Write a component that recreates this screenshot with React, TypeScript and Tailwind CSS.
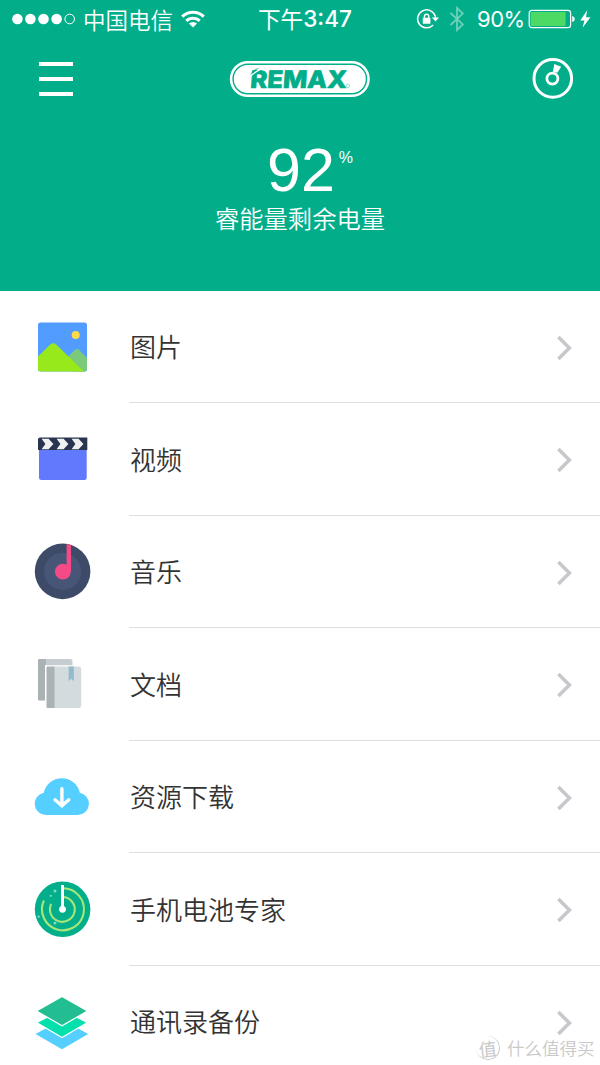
import type { ReactNode } from "react";

const cjk = "font-['Noto_Sans_CJK_SC',sans-serif]";

function PictureIcon() {
  return (
    <svg viewBox="0 0 64 64" className="w-16 h-16">
      <rect x="8" y="7.5" width="49" height="49" rx="2.5" fill="#529cff" />
      <circle cx="45.7" cy="20" r="4" fill="#ffd94a" />
      <path d="M38 42 L44.5 35.2 Q47 32.6 49.5 35.2 L57 43 V54 Q57 56.5 54.5 56.5 H44 Z" fill="#7bc97a" />
      <path d="M8 41.5 L20 29.7 Q23.2 26.8 26.4 29.7 L54 56.5 H10.5 Q8 56.5 8 54 Z" fill="#98e91b" />
    </svg>
  );
}

function VideoIcon() {
  return (
    <svg viewBox="0 0 64 64" className="w-16 h-16">
      <path d="M9 22 H56.7 V50.5 Q56.7 53 54.2 53 H11.5 Q9 53 9 50.5 Z" fill="#6179fd" />
      <path d="M8 12.5 Q8 10.5 10 10.5 H57.3 V23 H8 Z" fill="#283450" />
      <g fill="#eef0f1">
        <path d="M11.6 11.8 H18.6 L23.4 17 L18.6 22.2 H11.6 L15.4 17 Z" />
        <path d="M26.6 11.8 H33.6 L38.4 17 L33.6 22.2 H26.6 L30.4 17 Z" />
        <path d="M41.6 11.8 H48.6 L53.4 17 L48.6 22.2 H41.6 L45.4 17 Z" />
      </g>
    </svg>
  );
}

function MusicIcon() {
  return (
    <svg viewBox="0 0 64 64" className="w-16 h-16">
      <circle cx="32.6" cy="31.4" r="27.8" fill="#3d4a68" />
      <circle cx="32.6" cy="31.4" r="18.6" fill="#475577" />
      <path d="M36.6 4 Q39 4.2 41 5 V31.6 H36.6 Z" fill="#f44b86" />
      <circle cx="32.9" cy="31.6" r="7.9" fill="#f44b86" />
    </svg>
  );
}

function DocsIcon() {
  return (
    <svg viewBox="0 0 64 64" className="w-16 h-16">
      <path d="M15.5 7 H40 Q42.5 7 42.5 9.5 V13.2 H15.5 Z" fill="#c5cdd0" />
      <path d="M9 7 H16 V48.5 H9 Q8 48.5 8 47.5 V8 Q8 7 9 7 Z" fill="#aab2b4" />
      <rect x="15" y="13.2" width="2" height="36" fill="#fff" />
      <path d="M24 14.5 H48.5 Q51.2 14.5 51.2 17 V53.5 Q51.2 56 48.5 56 H24 Z" fill="#d3dbde" />
      <path d="M17.5 14.5 H24.5 V56 H17.5 Q16.5 56 16.5 55 V15.5 Q16.5 14.5 17.5 14.5 Z" fill="#aab2b4" />
      <path d="M38.6 14.5 H43.9 V29.3 L41.2 26.8 L38.6 29.3 Z" fill="#93bccb" />
    </svg>
  );
}

function CloudIcon() {
  return (
    <svg viewBox="0 0 64 64" className="w-16 h-16">
      <path d="M13.8 27.8 A18.4 18.4 0 0 1 49.8 27.8 A11.2 11.2 0 0 1 47.8 50 H15.8 A11.2 11.2 0 0 1 13.8 27.8 Z" fill="#54cfff" />
      <path
        d="M31.9 23.8 V41 M25 34.8 L31.9 40.8 L38.8 34.8"
        fill="none"
        stroke="#fff"
        strokeWidth="3.4"
        strokeLinecap="round"
        strokeLinejoin="round"
      />
    </svg>
  );
}

function RadarIcon() {
  return (
    <svg viewBox="0 0 64 64" className="w-16 h-16">
      <circle cx="32.6" cy="32.3" r="27.8" fill="#03ae8a" />
      <g fill="none" stroke="#a6e67a" strokeWidth="2.1">
        <path d="M32.6 11.3 A21 21 0 1 1 13.9 23.5" />
        <path d="M32.6 20 A12.4 12.4 0 1 1 21.2 27" />
      </g>
      <path d="M32.5 8 V32" stroke="#fff" strokeWidth="3" />
      <circle cx="32.5" cy="32.3" r="3.4" fill="#fff" />
      <g fill="#7fdcc4">
        <circle cx="25" cy="14" r="1.5" />
        <circle cx="20.8" cy="18.8" r="1.1" />
        <circle cx="25" cy="46" r="1.5" />
        <circle cx="8.6" cy="39.6" r="1.2" />
      </g>
    </svg>
  );
}

function LayersIcon() {
  return (
    <svg viewBox="0 0 64 64" className="w-16 h-16">
      <path d="M32 29.5 L58.2 44 L32 59.2 L5.5 44 Z" fill="#54cfff" />
      <path d="M32 19.5 L57.5 32.6 L32 47.6 L6.5 32.6 Z" fill="#03e0ac" stroke="#fff" strokeWidth="1.2" />
      <path d="M32 6.6 L57.5 21 L32 35.8 L6.5 21 Z" fill="#22bd90" stroke="#fff" strokeWidth="1.2" />
    </svg>
  );
}

const items: { label: string; icon: ReactNode }[] = [
  { label: "图片", icon: <PictureIcon /> },
  { label: "视频", icon: <VideoIcon /> },
  { label: "音乐", icon: <MusicIcon /> },
  { label: "文档", icon: <DocsIcon /> },
  { label: "资源下载", icon: <CloudIcon /> },
  { label: "手机电池专家", icon: <RadarIcon /> },
  { label: "通讯录备份", icon: <LayersIcon /> },
];

function StatusBar() {
  return (
    <div className="grid grid-cols-[220px_1fr_220px] items-center h-[38px]">
      <div className="flex items-center pl-3">
        <svg viewBox="0 0 64 12" className="w-16 h-3" fill="#fff">
          <circle cx="5.4" cy="6" r="5.3" />
          <circle cx="18.4" cy="6" r="5.3" />
          <circle cx="31.5" cy="6" r="5.3" />
          <circle cx="44.6" cy="6" r="5.3" />
          <circle cx="57.7" cy="6" r="4.8" fill="none" stroke="#fff" />
        </svg>
        <span className="ml-[7px] text-[22.5px] leading-none font-[350]">中国电信</span>
        <svg viewBox="0 0 24 18" className="ml-2 w-6 h-[18px]" fill="none" stroke="#fff" strokeWidth="3">
          <path d="M1.2 6.6 A15.5 15.5 0 0 1 22.8 6.6" />
          <path d="M5.3 10.9 A9.6 9.6 0 0 1 18.7 10.9" />
          <path d="M8 13.6 A6 6 0 0 1 16 13.6 L12 17.6 Z" fill="#fff" stroke="none" />
        </svg>
      </div>
      <div className="flex items-center justify-center pl-[10px] text-[22.6px] leading-none">
        <span>下午</span>
        <span className="font-['Inter',sans-serif] font-medium">3:47</span>
      </div>
      <div className="flex items-center pl-[36px]">
        <svg viewBox="0 0 24 22" className="w-6 h-[22px] shrink-0" fill="none" stroke="#fff">
          <path d="M17.2 17 A9 9 0 1 1 19.6 10" strokeWidth="1.5" />
          <path d="M15.8 9.4 H23 L19.5 13.4 Z" fill="#fff" stroke="none" />
          <rect x="6.8" y="9.8" width="7.6" height="6" rx="0.6" fill="#fff" stroke="none" />
          <path d="M8.4 10 V8.4 A2.2 2.2 0 0 1 12.8 8.4 V10" strokeWidth="1.4" />
        </svg>
        <svg viewBox="0 0 16 26" className="ml-[9px] w-4 h-[26px] shrink-0" fill="none" stroke="#6dd0bb" strokeWidth="1.8">
          <path d="M1.5 7 L13.8 18.4 L8 24 V2 L13.8 7.6 L1.5 19" />
        </svg>
        <span className="ml-[12px] w-[47px] font-['Inter',sans-serif] text-[22px] leading-none tracking-[-0.5px]">90%</span>
        <svg viewBox="0 0 64 20" className="ml-1 w-16 h-5 shrink-0">
          <rect x="1.2" y="1.4" width="41.4" height="17.2" rx="2.6" fill="none" stroke="#fff" strokeWidth="1.2" />
          <rect x="2.6" y="3" width="35" height="14" rx="1" fill="#4cd964" />
          <path d="M44.2 7 Q46.8 7.6 46.8 10 Q46.8 12.4 44.2 13 Z" fill="#fff" />
          <path d="M59.2 1.2 L52.2 11.4 H56.4 L54.6 18.8 L62.4 8.2 H58 Z" fill="#fff" />
        </svg>
      </div>
    </div>
  );
}

function Logo() {
  return (
    <svg viewBox="0 0 142 38" className="w-[142px] h-[38px]" aria-label="REMAX">
      <rect x="0.8" y="1" width="140" height="36" rx="18" fill="#fff" />
      <rect x="4.1" y="4.3" width="133.4" height="29.4" rx="14.7" fill="none" stroke="#02ae8a" strokeWidth="1.4" />
      <text
        x="20.5"
        y="27.6"
        textLength="96.5"
        lengthAdjust="spacingAndGlyphs"
        transform="translate(2.2 0) skewX(-4)"
        fontFamily="Inter, sans-serif"
        fontWeight="800"
        fontSize="24"
        fill="#02ae8a"
        stroke="#02ae8a"
        strokeWidth="0.7"
        strokeLinejoin="round"
      >
        REMAX
      </text>
      {/* Leaf cut over the R */}
      <path d="M18 20.5 Q23 13.4 31 9.6" fill="none" stroke="#fff" strokeWidth="1.3" />
      <path d="M20.8 15 Q23.6 9.2 30.6 7.8 Q26 10.8 20.8 15 Z" fill="#02ae8a" />
      <circle cx="118.8" cy="25.8" r="1.8" fill="none" stroke="#7fd5c3" strokeWidth="0.8" />
    </svg>
  );
}

export default function App() {
  return (
    <div className={`relative flex flex-col w-[600px] h-[1065px] overflow-hidden bg-white ${cjk}`}>
      <header className="h-[290.5px] shrink-0 bg-[#02ae8a] text-white">
        <StatusBar />
        <div className="flex items-center justify-between h-[82px] pl-[39px] pr-[26px]">
          <button className="flex flex-col gap-[11px] w-[74px]" aria-label="menu">
            <span className="w-[34px] h-1 bg-white" />
            <span className="w-[34px] h-1 bg-white" />
            <span className="w-[34px] h-1 bg-white" />
          </button>
          <Logo />
          <button className="flex justify-end w-[88px]" aria-label="disc">
            <svg viewBox="0 0 42 42" className="w-[42px] h-[42px]" fill="none" stroke="#fff">
              <circle cx="20.8" cy="20.4" r="18.8" strokeWidth="3" />
              <circle cx="20.4" cy="20.6" r="5.5" strokeWidth="2.8" />
              <path d="M22.2 6 L29.2 8.8 L25.4 14.8 L21 13.8 Z" fill="#fff" stroke="none" />
            </svg>
          </button>
        </div>
        <div className="flex flex-col items-center pt-5">
          <div className="flex items-start pl-[20px] font-['Liberation_Sans',sans-serif]">
            <span className="text-[61px] leading-[60px]">92</span>
            <span className="mt-[10px] ml-[4px] text-[16px] leading-none">%</span>
          </div>
          <p className="mt-1 text-[24.3px] leading-[28px] font-[350]">睿能量剩余电量</p>
        </div>
      </header>

      <ul className="shrink-0">
        {items.map((item) => (
          <li key={item.label} className="flex h-[112.5px] pl-[30px]">
            <span className="pt-6 w-[99px] shrink-0">{item.icon}</span>
            <div className="flex flex-1 items-center justify-between border-b border-[#dedfe0] pl-px pr-[26px]">
              <span className="text-[26px] leading-none font-[350] text-[#333]">{item.label}</span>
              <svg viewBox="0 0 18 26" className="mt-[3px] w-[18px] h-[26px]" fill="none" stroke="#c7c7cc" strokeWidth="3.6">
                <path d="M2.4 2 L13.4 13 L2.4 24" />
              </svg>
            </div>
          </li>
        ))}
      </ul>

      {/* Watermark */}
      <div className="absolute left-[476px] top-[1036px] flex items-center gap-[7px] text-[#c9c9c9]">
        <span className="flex items-center justify-center w-6 h-6 rounded-full border-b border-r border-[#c9c9c9] text-[18px] leading-none -rotate-6">
          值
        </span>
        <span className="text-[17.5px] leading-none whitespace-nowrap font-[350]">什么值得买</span>
      </div>
    </div>
  );
}
